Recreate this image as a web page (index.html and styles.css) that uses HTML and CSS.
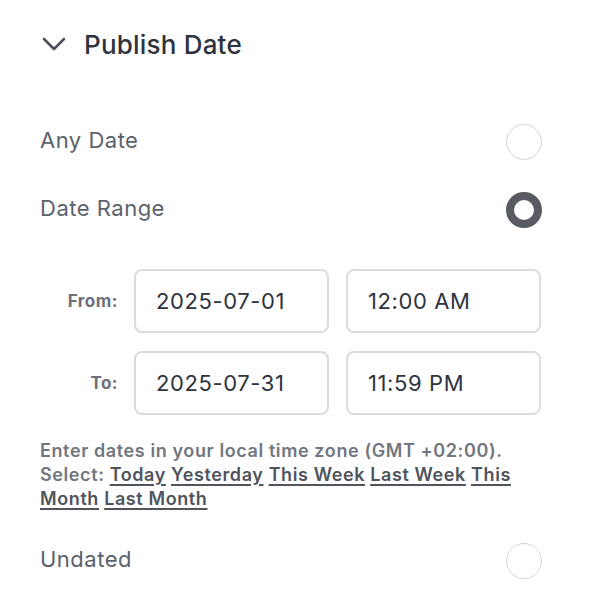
FILE: index.html
```html
<!DOCTYPE html>
<html>
<head>
<meta charset="utf-8">
<link rel="stylesheet" href="styles.css">
</head>
<body>
<div class="panel">
  <div class="header">
    <svg class="chev" width="24" height="24" viewBox="0 0 24 24"><path d="M2 7 L12 17 L22 7" fill="none" stroke="#4b5059" stroke-width="2.6" stroke-linecap="round" stroke-linejoin="round"/></svg>
    <span class="title">Publish Date</span>
  </div>
  <div class="option first">
    <span class="opt-label">Any Date</span>
    <span class="radio"></span>
  </div>
  <div class="option">
    <span class="opt-label">Date Range</span>
    <span class="radio checked"></span>
  </div>
  <div class="range">
    <span class="rlabel">From:</span>
    <div class="box">2025-07-01</div>
    <div class="box time">12:00 AM</div>
    <span class="rlabel">To:</span>
    <div class="box">2025-07-31</div>
    <div class="box time">11:59 PM</div>
  </div>
  <p class="help">Enter dates in your local time zone (GMT +02:00).<br>Select: <a>Today</a> <a>Yesterday</a> <a>This Week</a> <a>Last Week</a> <a>This Month</a> <a>Last Month</a></p>
  <div class="option undated">
    <span class="opt-label">Undated</span>
    <span class="radio"></span>
  </div>
</div>
</body>
</html>
```
FILE: styles.css
```css
html, body { margin: 0; padding: 0; background: #fff; }
body { font-family: Inter, "Noto Sans", sans-serif; }
.panel { width: 502px; padding: 24px 0 0 40px; }
.header { display: flex; align-items: center; height: 40px; gap: 18px; }
.chev { margin-left: 2px; }
.title { font-size: 26px; font-weight: 500; color: #2e333d; letter-spacing: 0.2px; }
.option { display: flex; align-items: center; justify-content: space-between; height: 36px; margin-top: 32px; }
.option.first { margin-top: 60px; }
.opt-label { font-size: 22px; color: #5c616b; margin-top: -4px; letter-spacing: 0.5px; }
.radio { width: 36px; height: 36px; box-sizing: border-box; border-radius: 50%; border: 1.5px solid #d1d4da; }
.radio.checked { border: 8px solid #585b62; }
.range { display: grid; grid-template-columns: 78px 195px 196px; column-gap: 16px; row-gap: 18px; margin-top: 41px; align-items: center; }
.box.time { margin-left: 1px; }
.rlabel { text-align: right; font-size: 17px; font-weight: 700; color: #6b7079; letter-spacing: 0.5px; }
.box { height: 64px; box-sizing: border-box; border: 2px solid #d9dce1; border-radius: 8px; padding-left: 20px; display: flex; align-items: center; font-size: 22px; color: #2e333d; letter-spacing: 0.6px; }
.help { margin: 24px 0 0 0; font-size: 18px; line-height: 24px; font-weight: 600; color: #71767f; letter-spacing: 0.6px; }
.help a { color: #4f545d; text-decoration: underline; text-underline-offset: 3px; text-decoration-thickness: 2px; }
.option.undated { margin-top: 32px; }
```
